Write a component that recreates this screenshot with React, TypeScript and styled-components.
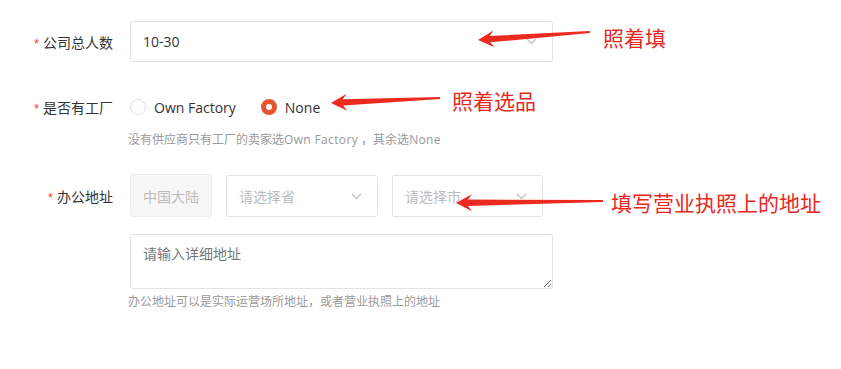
import React from "react"
import styled, { createGlobalStyle } from "styled-components"

const GlobalStyle = createGlobalStyle`
  html, body {
    margin: 0;
    padding: 0;
    background: #fff;
  }
  body {
    font-family: "Open Sans", "Noto Sans CJK SC", sans-serif;
    color: #333;
  }
`

type Pt = [number, number]

// tapered annotation arrow, thin at the tail and thick at the head
const arrowPoints = (tail: Pt, tip: Pt) => {
  const dx = tip[0] - tail[0]
  const dy = tip[1] - tail[1]
  const len = Math.hypot(dx, dy)
  const d = [dx / len, dy / len]
  const n = [-d[1], d[0]]
  const at = (back: number, side: number): string =>
    `${(tip[0] - d[0] * back + n[0] * side).toFixed(1)},${(
      tip[1] -
      d[1] * back +
      n[1] * side
    ).toFixed(1)}`
  const tailAt = (side: number) =>
    `${(tail[0] + n[0] * side).toFixed(1)},${(tail[1] + n[1] * side).toFixed(1)}`
  return [
    `${tip[0]},${tip[1]}`,
    at(16, 8.5),
    at(12, 3.2),
    tailAt(1.1),
    tailAt(-1.1),
    at(12, -3.2),
    at(16, -8.5),
  ].join(" ")
}

const arrows: { tail: Pt; tip: Pt }[] = [
  { tail: [590, 32], tip: [478, 40] },
  { tail: [440, 98], tip: [331, 103] },
  { tail: [603, 201], tip: [456, 203] },
]

const notes = [
  { text: "照着填", left: 603, top: 25 },
  { text: "照着选品", left: 452, top: 88 },
  { text: "填写营业执照上的地址", left: 611, top: 190 },
]

const Chevron = () => (
  <svg width="11" height="7" viewBox="0 0 11 7">
    <polyline
      points="1,1 5.5,5.5 10,1"
      fill="none"
      stroke="#c3c3c3"
      strokeWidth="1.3"
    />
  </svg>
)

export default function App() {
  return (
    <Page>
      <GlobalStyle />
      <Form>
        <FormItem $top={21}>
          <Label $h={41}>
            <Star>*</Star>公司总人数
          </Label>
          <Control>
            <Select $w={423} $h={41}>
              <Value>10-30</Value>
              <Chevron />
            </Select>
          </Control>
        </FormItem>

        <FormItem $top={25}>
          <Label $h={40}>
            <Star>*</Star>是否有工厂
          </Label>
          <Control>
            <RadioGroup>
              <RadioOption>
                <RadioDot />
                Own Factory
              </RadioOption>
              <RadioOption>
                <RadioDot $checked />
                None
              </RadioOption>
            </RadioGroup>
            <Help $top={4}>
              没有供应商只有工厂的卖家选<Latin>Own Factory</Latin> ，其余选<Latin>None</Latin>
            </Help>
          </Control>
        </FormItem>

        <FormItem $top={26}>
          <Label $h={42}>
            <Star>*</Star>办公地址
          </Label>
          <Control>
            <SelectRow>
              <Disabled>中国大陆</Disabled>
              <Select $w={152} $h={42}>
                <Placeholder>请选择省</Placeholder>
                <Chevron />
              </Select>
              <Select $w={151} $h={42}>
                <Placeholder>请选择市</Placeholder>
                <Chevron />
              </Select>
            </SelectRow>
            <TextArea placeholder="请输入详细地址" />
            <Help $top={4}>办公地址可以是实际运营场所地址，或者营业执照上的地址</Help>
          </Control>
        </FormItem>
      </Form>

      <Overlay>
        <svg width="841" height="369" viewBox="0 0 841 369">
          {arrows.map((a, i) => (
            <polygon key={i} points={arrowPoints(a.tail, a.tip)} fill="#ec2a1f" />
          ))}
        </svg>
        {notes.map(n => (
          <Note key={n.text} style={{ left: n.left, top: n.top }}>
            {n.text}
          </Note>
        ))}
      </Overlay>
    </Page>
  )
}

const Page = styled.div`
  position: relative;
  width: 841px;
  height: 369px;
  overflow: hidden;
  background: #fff;
`

const Form = styled.div`
  display: flex;
  flex-direction: column;
`

const FormItem = styled.div<{ $top: number }>`
  display: flex;
  align-items: flex-start;
  gap: 17px;
  margin-top: ${p => p.$top}px;
`

const Label = styled.div<{ $h: number }>`
  width: 113px;
  height: ${p => p.$h}px;
  display: flex;
  align-items: center;
  justify-content: flex-end;
  font-family: "Noto Sans CJK SC", sans-serif;
  font-size: 14px;
  color: #333;
  white-space: nowrap;
`

const Star = styled.span`
  color: #f0412f;
  font-family: "Liberation Sans", sans-serif;
  font-size: 13px;
  line-height: 13px;
  margin-right: 4px;
  padding-top: 3px;
`

const Control = styled.div`
  display: flex;
  flex-direction: column;
`

const Select = styled.div<{ $w: number; $h: number }>`
  box-sizing: border-box;
  width: ${p => p.$w}px;
  height: ${p => p.$h}px;
  border: 1px solid #e3e3e3;
  border-radius: 3px;
  background: #fff;
  display: flex;
  align-items: center;
  justify-content: space-between;
  padding: 0 15px 0 12px;
`

const Value = styled.span`
  font-size: 14px;
  color: #333;
`

const Placeholder = styled.span`
  font-family: "Noto Sans CJK SC", sans-serif;
  font-size: 14px;
  color: #bcbcbc;
`

const SelectRow = styled.div`
  display: flex;
  gap: 14px;
`

const Disabled = styled.div`
  box-sizing: border-box;
  height: 43px;
  margin-top: -1px;
  padding: 0 12px;
  display: flex;
  align-items: center;
  border: 1px solid #ececec;
  border-radius: 3px;
  background: #f7f7f7;
  font-family: "Noto Sans CJK SC", sans-serif;
  font-size: 14px;
  color: #bcbcbc;
`

const RadioGroup = styled.div`
  height: 40px;
  display: flex;
  align-items: center;
  gap: 25px;
`

const RadioOption = styled.label`
  display: flex;
  align-items: center;
  gap: 8px;
  font-size: 14px;
  color: #333;
`

const RadioDot = styled.span<{ $checked?: boolean }>`
  box-sizing: border-box;
  width: 16px;
  height: 16px;
  border-radius: 50%;
  border: ${p => (p.$checked ? "5px solid #e4552f" : "1px solid #e0e0e0")};
  background: #fff;
`

const Help = styled.div<{ $top: number }>`
  margin-top: ${p => p.$top}px;
  margin-left: -2px;
  font-size: 12px;
  line-height: 18px;
  color: #9a9a9a;
  white-space: nowrap;
`

const Latin = styled.span`
  letter-spacing: 0.35px;
`

const TextArea = styled.textarea`
  box-sizing: border-box;
  display: block;
  width: 423px;
  height: 55px;
  margin: 17px 0 0;
  padding: 8px 12px;
  border: 1px solid #e3e3e3;
  border-radius: 3px;
  font-family: "Noto Sans CJK SC", sans-serif;
  font-size: 14px;
  line-height: 20px;
  color: #333;
  outline: none;
  &::placeholder {
    color: #777;
  }
`

const Overlay = styled.div`
  position: absolute;
  inset: 0;
  pointer-events: none;
  svg {
    position: absolute;
    left: 0;
    top: 0;
  }
`

const Note = styled.div`
  position: absolute;
  font-family: "Noto Sans CJK SC", sans-serif;
  font-size: 21px;
  line-height: 24px;
  color: #e8281e;
  white-space: nowrap;
`
